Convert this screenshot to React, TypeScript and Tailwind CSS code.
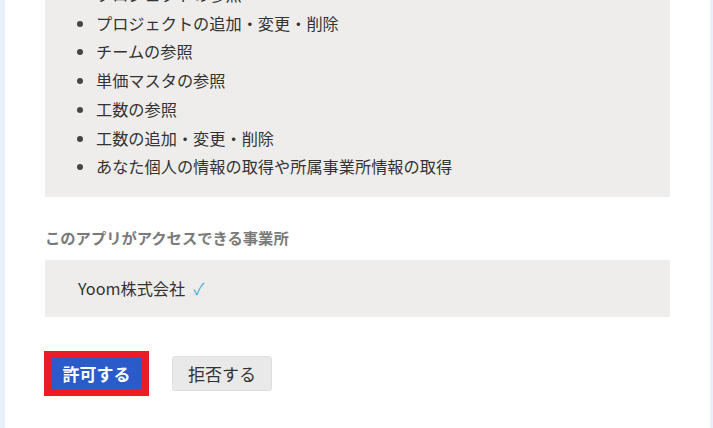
const PERMISSIONS = [
  "プロジェクトの参照",
  "プロジェクトの追加・変更・削除",
  "チームの参照",
  "単価マスタの参照",
  "工数の参照",
  "工数の追加・変更・削除",
  "あなた個人の情報の取得や所属事業所情報の取得",
];

const FONT = "font-['Meiryo','Noto_Sans_CJK_JP','Noto_Sans',sans-serif]";

export default function App() {
  return (
    <div className={`flex h-[428px] w-[713px] overflow-hidden bg-[#e8f0fe] ${FONT}`}>
      <div className="ml-[5px] mr-[3px] flex-1 overflow-hidden bg-white">
        <div className="-mt-[36px] px-[40px]">
          <div className="bg-[#eeedeb] pt-4 pb-4">
            <ul className="list-disc pl-[51px] text-[16.2px] leading-[28.7px] text-[#333] marker:text-[#444]">
              {PERMISSIONS.map((item) => (
                <li key={item}>{item}</li>
              ))}
            </ul>
          </div>

          <h3 className="mt-[29px] text-[15.3px] font-bold leading-[22px] text-[#7a7a7a]">このアプリがアクセスできる事業所</h3>

          <div className="mt-[12px] flex h-[57px] items-center bg-[#eeedeb] pl-[33px] text-[16.2px] text-[#333]">
            <span>Yoom株式会社</span>
            <span className="ml-[8px] text-[#3aaee0]">✓</span>
          </div>

          <div className="mt-[34px] flex items-center gap-[23px] -ml-px">
            <div className="border-[7px] border-[#ec1c24]">
              <button
                className="flex h-[31px] w-[91px] items-center justify-center bg-[#2b5bcb] text-[17px] font-bold text-white"
                type="button"
              >
                許可する
              </button>
            </div>
            <button
              className="flex h-[35px] w-[100px] items-center justify-center rounded-[3px] border border-[#dedede] bg-[#e9e9e9] text-[17px] text-[#333]"
              type="button"
            >
              拒否する
            </button>
          </div>
        </div>
      </div>
    </div>
  );
}
